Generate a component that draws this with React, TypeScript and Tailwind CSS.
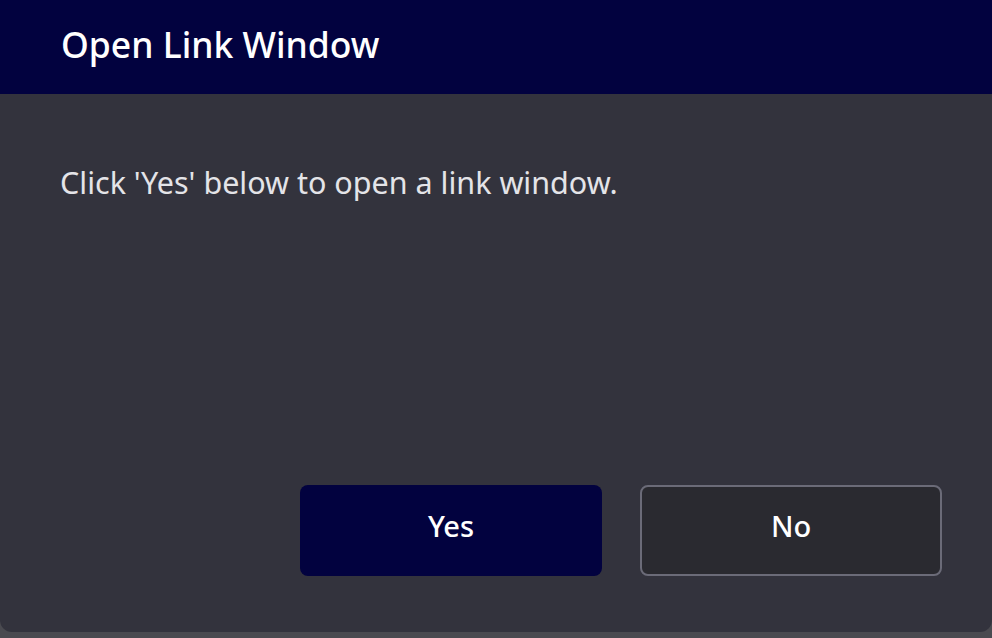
export default function App() {
  return (
    <div className="h-[638px] w-[992px] bg-[#4a4a50] font-['Noto_Sans',sans-serif]">
      <div className="flex h-[632px] flex-col overflow-hidden rounded-b-xl bg-[#33333d]">
        {/* Header */}
        <div className="flex h-[94px] items-center bg-[#02023f] px-[61px] pb-[5px]">
          <h1 className="text-[35.5px] font-medium leading-none text-white">Open Link Window</h1>
        </div>

        {/* Body */}
        <div className="flex flex-1 flex-col px-[60px] pt-[66px]">
          <p className="text-[30.5px] leading-[45px] text-[#e4e4e8]">
            Click 'Yes' below to open a link window.
          </p>
        </div>

        {/* Actions */}
        <div className="flex justify-end gap-[38px] pr-[50px] pb-[56px]">
          <button className="h-[91px] w-[302px] rounded-lg bg-[#02023f] pb-[10px] text-[29px] font-medium text-white">
            Yes
          </button>
          <button className="h-[91px] w-[302px] rounded-lg border-2 border-[#6b6b78] bg-[#2a2a30] pb-[10px] text-[29px] font-medium text-white">
            No
          </button>
        </div>
      </div>
    </div>
  );
}
